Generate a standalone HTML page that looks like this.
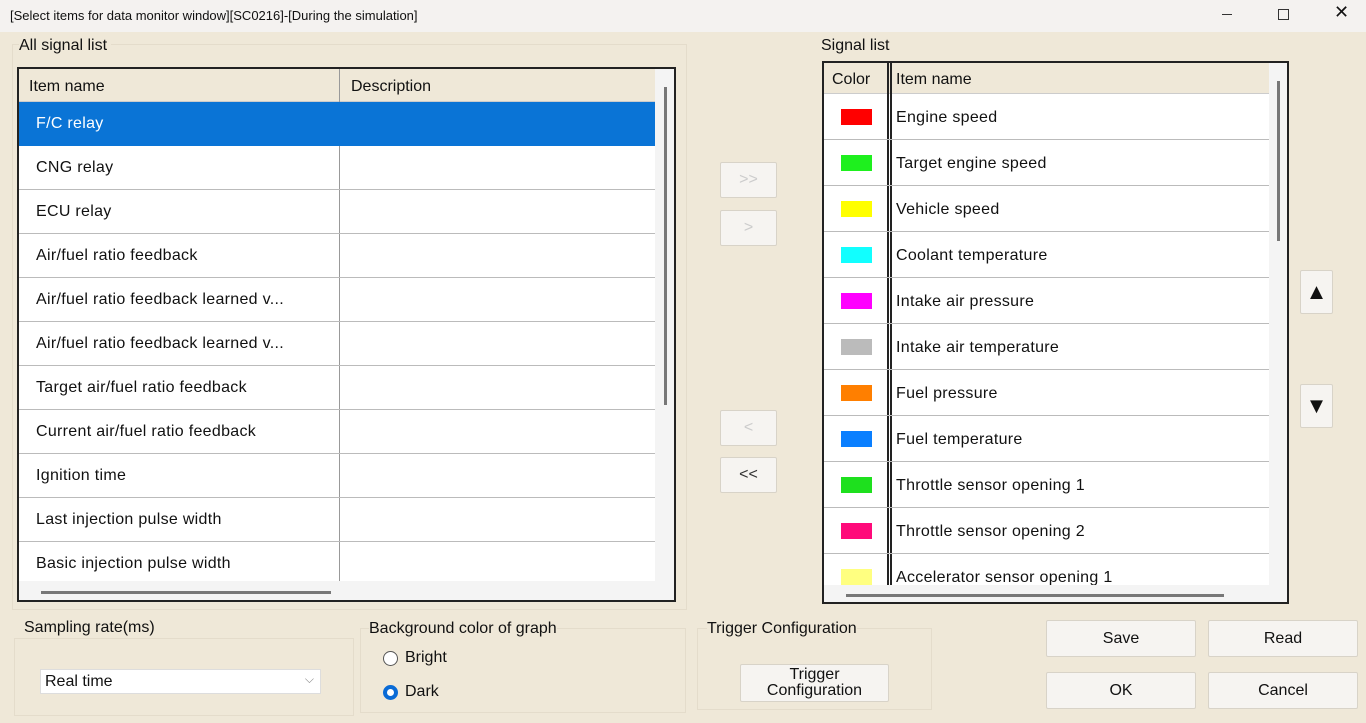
<!DOCTYPE html>
<html><head><style>
*{box-sizing:border-box;margin:0;padding:0}
body{width:1366px;height:723px;overflow:hidden;background:#efe8d8;font-family:"Liberation Sans",sans-serif;position:relative;color:#111}
.a{position:absolute}
.title{left:0;top:0;width:1366px;height:32px;background:#f4f2f0;font-size:13px;padding:8px 10px}
.tbl{background:#fff;border:2px solid #222}
.row{position:absolute;left:0;height:44px;border-bottom:1px solid #bbb;font-size:16px;letter-spacing:.3px}
.btn{background:#f6f4f1;border:1px solid #d8d3c8;border-radius:2px;display:flex;align-items:center;justify-content:center;font-size:16px}
.grp{border:1px solid #e4dccb}
.lbl{font-size:16px}
</style></head><body>
<div class="a title">[Select items for data monitor window][SC0216]-[During the simulation]
<span class="a" style="left:1222px;top:14px;width:10px;border-top:1px solid #333"></span>
<span class="a" style="left:1278px;top:9px;width:11px;height:11px;border:1px solid #333"></span>
<span class="a" style="left:1334px;top:2px;font-size:18px">✕</span></div>
<div class="a grp" style="left:12px;top:44px;width:675px;height:566px"></div>
<div class="a lbl" style="left:19px;top:37px;background:#efe8d8;padding-right:4px">All signal list</div>
<div class="a tbl" style="left:17px;top:67px;width:659px;height:535px;overflow:hidden">
 <div class="a" style="left:0;top:0;width:636px;height:33px;background:#efe8d8;border-bottom:1px solid #ccc"></div>
 <div class="a lbl" style="left:10px;top:9px">Item name</div>
 <div class="a lbl" style="left:332px;top:9px">Description</div>
 <div class="a" style="left:320px;top:0;width:1px;height:520px;background:#999"></div>
 <div class="row" style="top:33px;width:636px;background:#0a74d6;color:#fff;border:none"><span class="a" style="left:17px;top:13px">F/C relay</span></div>
 <div class="row" style="top:77px;width:636px"><span class="a" style="left:17px;top:13px">CNG relay</span></div>
 <div class="row" style="top:121px;width:636px"><span class="a" style="left:17px;top:13px">ECU relay</span></div>
 <div class="row" style="top:165px;width:636px"><span class="a" style="left:17px;top:13px">Air/fuel ratio feedback</span></div>
 <div class="row" style="top:209px;width:636px"><span class="a" style="left:17px;top:13px">Air/fuel ratio feedback learned v...</span></div>
 <div class="row" style="top:253px;width:636px"><span class="a" style="left:17px;top:13px">Air/fuel ratio feedback learned v...</span></div>
 <div class="row" style="top:297px;width:636px"><span class="a" style="left:17px;top:13px">Target air/fuel ratio feedback</span></div>
 <div class="row" style="top:341px;width:636px"><span class="a" style="left:17px;top:13px">Current air/fuel ratio feedback</span></div>
 <div class="row" style="top:385px;width:636px"><span class="a" style="left:17px;top:13px">Ignition time</span></div>
 <div class="row" style="top:429px;width:636px"><span class="a" style="left:17px;top:13px">Last injection pulse width</span></div>
 <div class="row" style="top:473px;width:636px"><span class="a" style="left:17px;top:13px">Basic injection pulse width</span></div>
 <div class="a" style="left:636px;top:0;width:21px;height:535px;background:#f4f4f4"></div>
 <div class="a" style="left:645px;top:18px;width:3px;height:318px;background:#777"></div>
 <div class="a" style="left:0;top:512px;width:636px;height:21px;background:#f4f4f4"></div>
 <div class="a" style="left:22px;top:522px;width:290px;height:3px;background:#777"></div>
</div>
<div class="a btn" style="left:720px;top:162px;width:57px;height:36px;color:#ccc">&gt;&gt;</div>
<div class="a btn" style="left:720px;top:210px;width:57px;height:36px;color:#ccc">&gt;</div>
<div class="a btn" style="left:720px;top:410px;width:57px;height:36px;color:#ccc">&lt;</div>
<div class="a btn" style="left:720px;top:457px;width:57px;height:36px;color:#333">&lt;&lt;</div>
<div class="a lbl" style="left:821px;top:37px">Signal list</div>
<div class="a tbl" style="left:822px;top:61px;width:467px;height:543px;overflow:hidden">
 <div class="a" style="left:0;top:0;width:445px;height:31px;background:#efe8d8;border-bottom:1px solid #ccc"></div>
 <div class="a lbl" style="left:8px;top:8px">Color</div>
 <div class="a lbl" style="left:72px;top:8px">Item name</div>
 <div class="a" style="left:63px;top:0;width:5px;height:543px;border-left:2px solid #222;border-right:2px solid #222"></div>
 <div id="rl"></div>
 <div class="a" style="left:445px;top:0;width:20px;height:543px;background:#f4f4f4"></div>
 <div class="a" style="left:453px;top:18px;width:3px;height:160px;background:#777"></div>
 <div class="a" style="left:0;top:522px;width:445px;height:19px;background:#f4f4f4"></div>
 <div class="a" style="left:22px;top:531px;width:378px;height:3px;background:#777"></div>
</div>
<div class="a btn" style="left:1300px;top:270px;width:33px;height:44px;font-size:22px">▲</div>
<div class="a btn" style="left:1300px;top:384px;width:33px;height:44px;font-size:22px">▼</div>
<div class="a grp" style="left:14px;top:638px;width:340px;height:78px"></div>
<div class="a lbl" style="left:24px;top:619px;background:#efe8d8">Sampling rate(ms)</div>
<div class="a" style="left:40px;top:669px;width:281px;height:25px;background:#fff;border:1px solid #ddd;font-size:16px;padding:3px 4px">Real time<span class="a" style="right:6px;top:2px;color:#888;font-size:12px">⌵</span></div>
<div class="a grp" style="left:360px;top:628px;width:326px;height:85px"></div>
<div class="a lbl" style="left:369px;top:620px;background:#efe8d8">Background color of graph</div>
<div class="a" style="left:383px;top:651px;width:15px;height:15px;border:1px solid #555;border-radius:50%;background:#fff"></div>
<div class="a lbl" style="left:405px;top:649px">Bright</div>
<div class="a" style="left:383px;top:685px;width:15px;height:15px;border:4px solid #0a6bd6;border-radius:50%;background:#fff"></div>
<div class="a lbl" style="left:405px;top:683px">Dark</div>
<div class="a grp" style="left:697px;top:628px;width:235px;height:82px"></div>
<div class="a lbl" style="left:707px;top:620px;background:#efe8d8">Trigger Configuration</div>
<div class="a btn" style="left:740px;top:664px;width:149px;height:38px;line-height:16px;text-align:center;flex-direction:column">Trigger<br>Configuration</div>
<div class="a btn" style="left:1046px;top:620px;width:150px;height:37px">Save</div>
<div class="a btn" style="left:1208px;top:620px;width:150px;height:37px">Read</div>
<div class="a btn" style="left:1046px;top:672px;width:150px;height:37px">OK</div>
<div class="a btn" style="left:1208px;top:672px;width:150px;height:37px">Cancel</div>
<script>
var d=[["#f00","Engine speed"],["#1ef01e","Target engine speed"],["#ff0","Vehicle speed"],["#1ff","Coolant temperature"],["#f0f","Intake air pressure"],["#bbb","Intake air temperature"],["#ff7f00","Fuel pressure"],["#0a7fff","Fuel temperature"],["#1ee01e","Throttle sensor opening 1"],["#ff0a7a","Throttle sensor opening 2"],["#ffff80","Accelerator sensor opening 1"]];
var h="";d.forEach(function(r,i){var t=31+i*46;h+='<div class="row" style="top:'+t+'px;width:445px;height:46px"><span class="a" style="left:17px;top:15px;width:31px;height:16px;background:'+r[0]+'"></span><span class="a" style="left:72px;top:15px">'+r[1]+'</span></div>';});
document.getElementById("rl").innerHTML=h;
</script>
</body></html>
